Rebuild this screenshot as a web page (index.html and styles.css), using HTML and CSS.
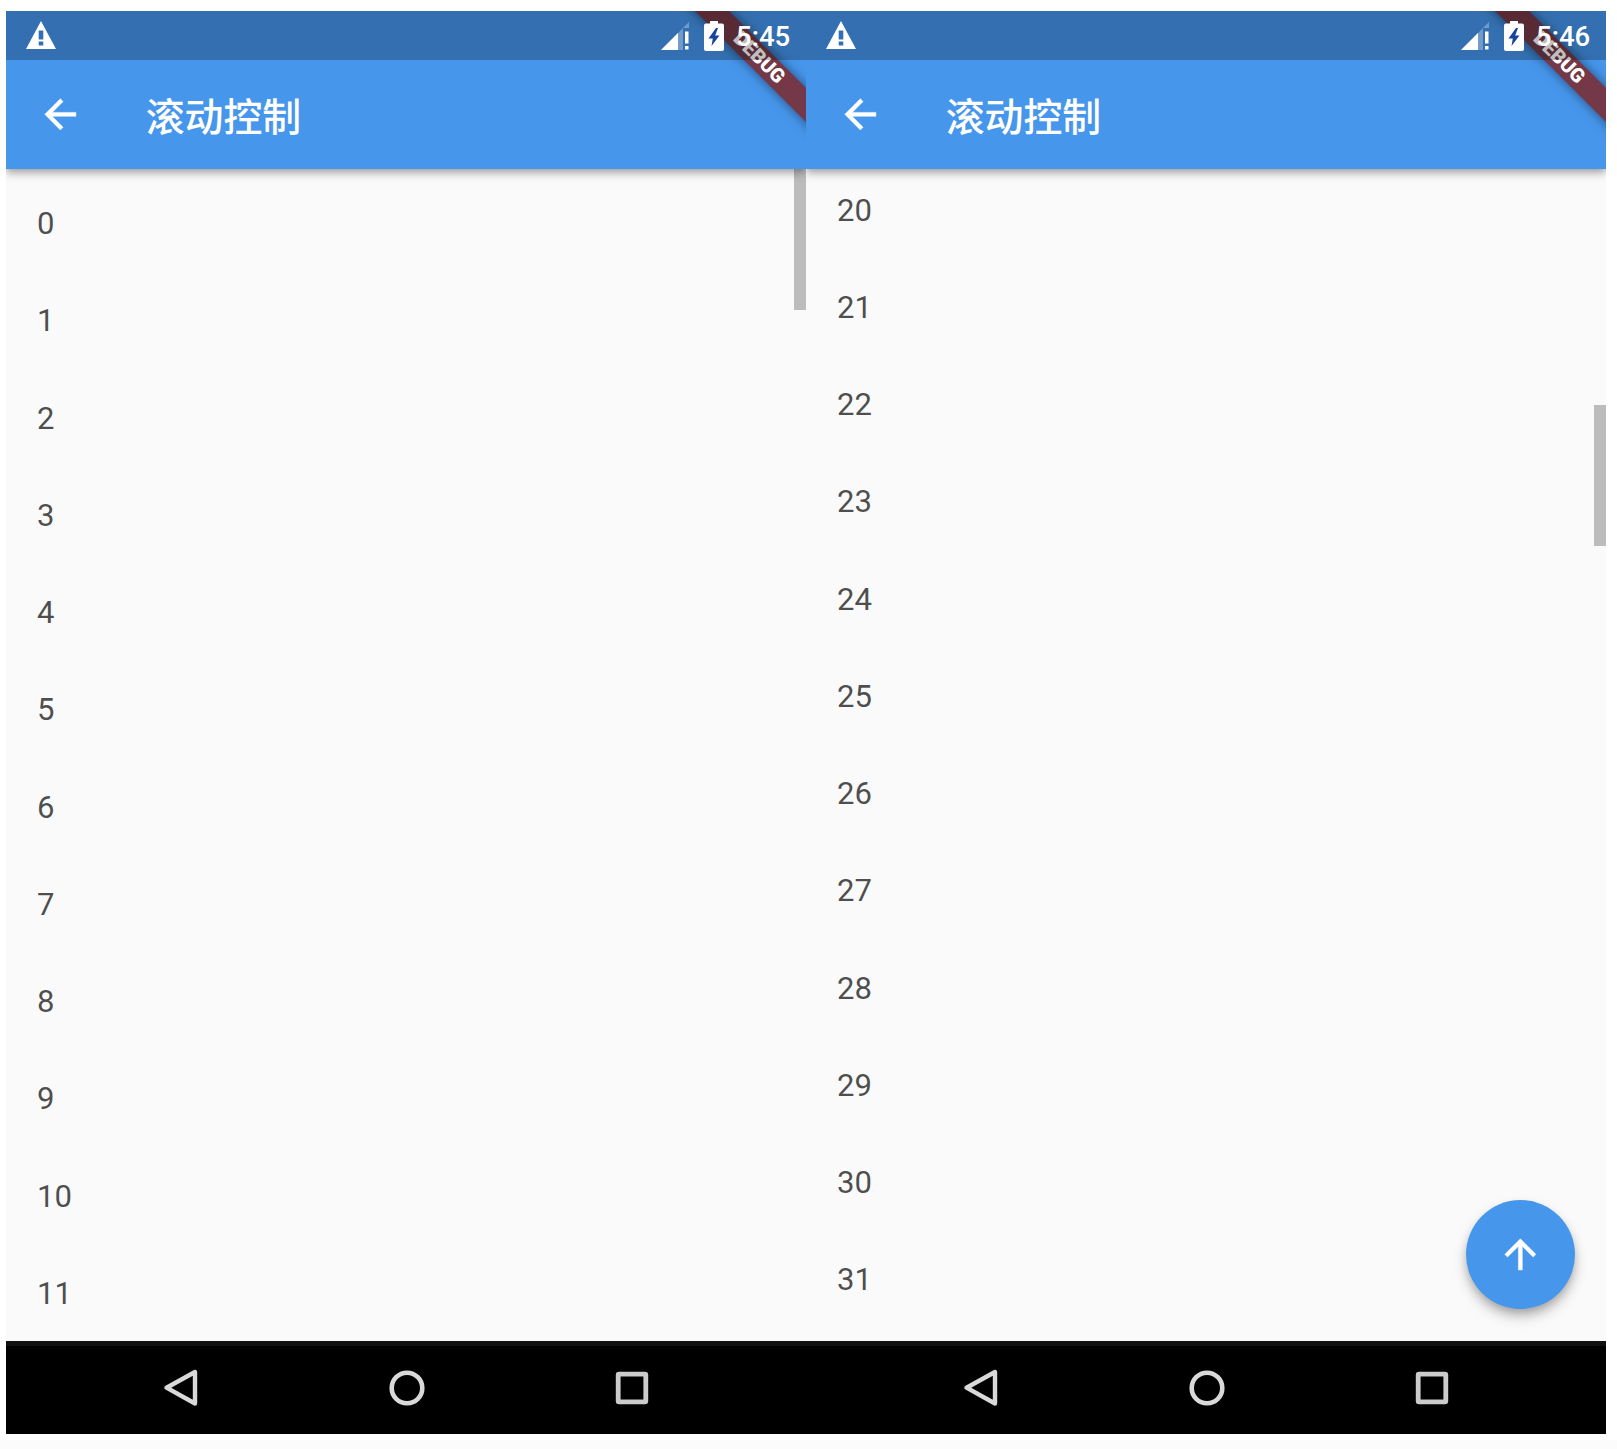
FILE: index.html
```html
<!DOCTYPE html>
<html lang="zh">
<head>
<meta charset="utf-8">
<title>滚动控制</title>
<link rel="stylesheet" href="styles.css">
</head>
<body>
<svg class="defs" aria-hidden="true">
  <symbol id="warn" viewBox="0 0 30 28"><path fill="#fff" fill-rule="evenodd" d="M15 0 30 28H0ZM12.7 9.500V18.500h4.600V9.500ZM12.700 20.500v4h4.600v-4Z"/></symbol>
  <symbol id="signal" viewBox="0 0 28 28"><path fill="#fff" opacity=".3" d="M28 0V6H22V28H0Z"/><path fill="#fff" d="M0 28 17 11V28ZM24 9.500h3.500V21.500H24ZM24 24h3.500v3.500H24Z"/></symbol>
  <symbol id="battery" viewBox="0 0 20 30"><path fill="#fff" d="M6 0h8v2.500h4q2 0 2 2V28q0 2-2 2H2q-2 0-2-2V4.500q0-2 2-2h4Z"/><path fill="#17449a" d="M12 7 4.500 17.500h4.300L7.500 25 15.500 14.500h-4.300L14 7Z"/></symbol>
  <symbol id="back" viewBox="0 0 24 24"><path fill="#fff" stroke="#fff" stroke-width=".25" d="M20 11H7.830l5.590-5.590L12 4l-8 8 8 8 1.410-1.410L7.830 13H20v-2z"/></symbol>
  <symbol id="up" viewBox="0 0 24 24"><path fill="#fff" stroke="#fff" stroke-width=".25" d="M4 12l1.410 1.410L11 7.830V20h2V7.830l5.580 5.590L20 12l-8-8-8 8z"/></symbol>
  <symbol id="nav-back" viewBox="0 0 38 38"><path fill="none" stroke="#d9d9d9" stroke-width="4.400" stroke-linejoin="round" d="M33 3V34.500L4.500 18.700Z"/></symbol>
  <symbol id="nav-home" viewBox="0 0 38 38"><circle cx="19" cy="19" r="15.300" fill="none" stroke="#d9d9d9" stroke-width="4.600"/></symbol>
  <symbol id="nav-recent" viewBox="0 0 38 38"><rect x="5.200" y="5.200" width="27.600" height="27.600" rx=".8" fill="none" stroke="#ccc" stroke-width="4.800"/></symbol>
</svg>
<main class="screens">
  <section class="phone">
    <header class="top">
      <div class="status">
        <svg class="warn"><use href="#warn"/></svg>
        <svg class="signal"><use href="#signal"/></svg>
        <svg class="battery"><use href="#battery"/></svg>
        <span class="time">5:45</span>
      </div>
      <div class="appbar">
        <svg class="icon"><use href="#back"/></svg>
        <h1 class="title">滚动控制</h1>
      </div>
      <div class="banner-clip"><div class="banner">DEBUG</div></div>
    </header>
    <div class="content">
      <ul class="list">
        <li>0</li><li>1</li><li>2</li><li>3</li><li>4</li><li>5</li>
        <li>6</li><li>7</li><li>8</li><li>9</li><li>10</li><li>11</li>
      </ul>
      <div class="thumb"></div>
    </div>
    <nav class="nav">
      <svg><use href="#nav-back"/></svg>
      <svg><use href="#nav-home"/></svg>
      <svg><use href="#nav-recent"/></svg>
    </nav>
  </section>
  <section class="phone">
    <header class="top">
      <div class="status">
        <svg class="warn"><use href="#warn"/></svg>
        <svg class="signal"><use href="#signal"/></svg>
        <svg class="battery"><use href="#battery"/></svg>
        <span class="time">5:46</span>
      </div>
      <div class="appbar">
        <svg class="icon"><use href="#back"/></svg>
        <h1 class="title">滚动控制</h1>
      </div>
      <div class="banner-clip"><div class="banner">DEBUG</div></div>
    </header>
    <div class="content">
      <ul class="list list-scrolled">
        <li>20</li><li>21</li><li>22</li><li>23</li><li>24</li><li>25</li>
        <li>26</li><li>27</li><li>28</li><li>29</li><li>30</li><li>31</li>
      </ul>
      <div class="thumb thumb-scrolled"></div>
      <button class="fab" aria-label="回到顶部"><svg class="icon"><use href="#up"/></svg></button>
    </div>
    <nav class="nav">
      <svg><use href="#nav-back"/></svg>
      <svg><use href="#nav-home"/></svg>
      <svg><use href="#nav-recent"/></svg>
    </nav>
  </section>
</main>
<footer class="page-foot"></footer>
</body>
</html>
```
FILE: styles.css
```css
* { box-sizing: border-box; }

body {
  margin: 0;
  height: 1449px;
  overflow: hidden;
  display: flex;
  flex-direction: column;
  background: #fff;
  font-family: Roboto, "Noto Sans CJK SC", sans-serif;
}

.defs { position: absolute; width: 0; height: 0; }

.screens {
  display: flex;
  padding: 11px 0 0 6px;
}

.phone {
  width: 800px;
  height: 1423px;
  display: flex;
  flex-direction: column;
  overflow: hidden;
  background: #fafafa;
}

.top {
  position: relative;
  z-index: 1;
  flex: none;
  height: 157.5px;
  background: #4696ec;
  box-shadow: 0 4px 10px rgba(0, 0, 0, .2), 0 2px 8px rgba(0, 0, 0, .25);
}

.status {
  position: relative;
  z-index: 2;
  height: 48.5px;
  display: flex;
  align-items: flex-start;
  padding: 10px 16px 0 20px;
  background: rgba(0, 0, 0, .25);
}

.warn { width: 30px; height: 28px; }
.signal { width: 28px; height: 28px; margin: 1px 15px 0 auto; }
.battery { width: 20px; height: 30px; margin-right: 12px; }

.time {
  width: 54px;
  padding-top: 1px;
  color: #fff;
  font-size: 27.5px;
  font-weight: 500;
  line-height: 30px;
}

.appbar {
  height: 109px;
  display: flex;
  align-items: center;
  gap: 62px;
  padding-left: 31px;
}

.icon { width: 46.7px; height: 46.7px; }

.title {
  margin: 0;
  padding-top: 7px;
  color: #fff;
  font-size: 38.9px;
  font-weight: 500;
  line-height: 56px;
}

.banner-clip {
  position: absolute;
  z-index: 1;
  inset: 0;
  overflow: hidden;
}

.banner {
  position: absolute;
  top: 35.3px;
  right: -53px;
  width: 200px;
  height: 23.8px;
  transform: rotate(45deg);
  background: #743848;
  box-shadow: 0 0 12px rgba(0, 0, 0, .5);
  color: #fff;
  font-size: 19.8px;
  font-weight: 900;
  line-height: 23.8px;
  text-align: center;
}

.content {
  position: relative;
  flex: 1;
  overflow: hidden;
}

.list {
  margin: 0;
  padding: 6.500px 0 0 31px;
  list-style: none;
  color: rgba(0, 0, 0, .7);
  font-size: 31.1px;
}

.list li { height: 97.25px; line-height: 97.25px; }

.list-scrolled { margin-top: -13.5px; }

.thumb {
  position: absolute;
  top: 0;
  right: 0;
  width: 12px;
  height: 141px;
  background: #bcbcbc;
}

.thumb-scrolled { top: 236px; }

.fab {
  position: absolute;
  right: 31px;
  bottom: 31.5px;
  width: 109px;
  height: 109px;
  display: grid;
  place-items: center;
  padding: 0;
  border: 0;
  border-radius: 50%;
  background: #4696ec;
  box-shadow: 0 8px 14px rgba(0, 0, 0, .2), 0 5px 10px -2px rgba(0, 0, 0, .22);
}

.nav {
  flex: none;
  height: 93.5px;
  display: flex;
  justify-content: center;
  gap: 187.4px;
  padding: 23px 0 0 1px;
  border-top: 5px solid #101010;
  background: #000;
}

.nav svg { width: 38px; height: 38px; }

.page-foot {
  margin-top: 6px;
  flex: 1;
  background: #fcfcfc;
}
```
